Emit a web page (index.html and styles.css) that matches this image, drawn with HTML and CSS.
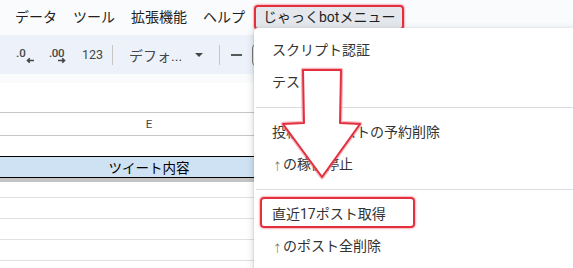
FILE: index.html
```html
<!DOCTYPE html>
<html lang="ja">
<head>
    <meta charset="UTF-8">
    <meta name="viewport" content="width=device-width, initial-scale=1.0">
    <title>じゃっくbotメニュー</title>
    <link rel="stylesheet" href="styles.css">
</head>
<body>
    <div class="sheet-app">
        <!-- メニューバー -->
        <div class="menubar">
            <span class="mb-item">データ</span>
            <span class="mb-item">ツール</span>
            <span class="mb-item">拡張機能</span>
            <span class="mb-item">ヘルプ</span>
            <span class="mb-item active">じゃっくbotメニュー</span>
        </div>

        <!-- ツールバー -->
        <div class="toolbar">
            <svg class="tb-dec" width="22" height="22" viewBox="0 0 22 22">
                <text x="2" y="12.5" font-size="11.5" font-family="Roboto, sans-serif" font-weight="500" fill="#444746">.0</text>
                <path d="M20 16.5H13.5M15.8 14.3l-2.3 2.2 2.3 2.2" stroke="#444746" stroke-width="1.6" fill="none"/>
            </svg>
            <svg class="tb-inc" width="22" height="22" viewBox="0 0 22 22">
                <text x="2" y="12.5" font-size="11.5" font-family="Roboto, sans-serif" font-weight="500" fill="#444746" letter-spacing="-0.4">.00</text>
                <path d="M11 16.5H17.5M15.2 14.3l2.3 2.2-2.3 2.2" stroke="#444746" stroke-width="1.6" fill="none"/>
            </svg>
            <span class="tb-num">123</span>
            <span class="tb-sep"></span>
            <span class="tb-font">デフォ...</span>
            <svg class="tb-caret" width="8" height="4" viewBox="0 0 8 4"><path d="M0 0h8L4 4z" fill="#444746"/></svg>
            <span class="tb-sep second"></span>
            <svg class="tb-minus" width="11" height="12" viewBox="0 0 11 12"><path d="M0 6h11" stroke="#444746" stroke-width="1.8"/></svg>
            <span class="tb-size"></span>
        </div>

        <div class="formula-gap"></div>
        <div class="formula"></div>

        <!-- シート -->
        <div class="grid">
            <div class="row colhead"><div class="cell">E</div></div>
            <div class="row blank"><div class="cell"></div></div>
            <div class="row title"><div class="cell">ツイート内容</div></div>
            <div class="freeze"></div>
            <div class="row first"></div>
            <div class="row"></div>
            <div class="row"></div>
            <div class="row"></div>
        </div>

        <!-- ドロップダウン -->
        <div class="dropdown">
            <div class="dd-item">スクリプト認証</div>
            <div class="dd-item">テスト</div>
            <div class="dd-sep"></div>
            <div class="dd-item">投稿済みポストの予約削除</div>
            <div class="dd-item"><span class="up">↑</span>の稼働停止</div>
            <div class="dd-sep"></div>
            <div class="dd-item marked">直近17ポスト取得</div>
            <div class="dd-item"><span class="up">↑</span>のポスト全削除</div>
        </div>

        <!-- 注釈の矢印 -->
        <svg class="note-arrow" width="90" height="118" viewBox="0 0 90 118">
            <polygon points="25,5 63,5 62,58 82,59 44,112 5,59 26,58" fill="#fff" stroke="rgba(240,90,110,0.45)" stroke-width="4.5" stroke-linejoin="round"/>
            <polygon points="25,5 63,5 62,58 82,59 44,112 5,59 26,58" fill="#fff" stroke="#e3303f" stroke-width="2" stroke-linejoin="round"/>
        </svg>
    </div>
</body>
</html>
```

FILE: styles.css
```css
body {
    margin: 0;
    padding: 0;
    background: #fff;
    font-family: Roboto, "Noto Sans CJK JP", sans-serif;
    overflow: hidden;
}

.sheet-app {
    position: relative;
    width: 573px;
    height: 268px;
    overflow: hidden;
}

.menubar {
    height: 35px;
    display: flex;
    align-items: center;
    padding-left: 7px;
    background: #f9fbfd;
    font-size: 14px;
    color: #1f1f1f;
}

.mb-item {
    padding: 0 8px;
    line-height: 21px;
    white-space: nowrap;
}

.mb-item.active {
    margin-left: 1px;
    padding: 0 7px;
    background: #e4e7ec;
    border: 2px solid #e3303f;
    border-radius: 4px;
    box-shadow: 0 0 1.5px 1px rgba(240, 90, 110, 0.45);
}

.toolbar {
    height: 39px;
    display: flex;
    align-items: center;
    background: #edf2fa;
    color: #444746;
}

.tb-dec { margin-left: 14px; }
.tb-inc { margin-left: 11px; }

.tb-num {
    margin-left: 13px;
    font-size: 12.5px;
}

.tb-sep {
    width: 1px;
    height: 20px;
    margin-left: 9px;
    background: #c7c7c7;
}

.tb-sep.second { margin-left: 16px; }

.tb-font {
    margin-left: 16px;
    font-size: 14px;
    white-space: nowrap;
}

.tb-caret { margin-left: 13px; }
.tb-minus { margin-left: 11px; }

.tb-size {
    width: 30px;
    height: 20px;
    margin-left: 10px;
    border: 1px solid #747775;
    border-radius: 4px;
}

.formula-gap {
    height: 9px;
    background: #f9fbfd;
}

.formula {
    height: 29px;
}

.row {
    height: 20px;
    border-bottom: 1px solid #e1e1e1;
}

.row .cell {
    width: 298px;
    height: 100%;
    display: flex;
    align-items: center;
    justify-content: center;
}

.row.colhead {
    height: 22px;
    border-top: 1px solid #c4c7c5;
    border-bottom: 1px solid #c4c7c5;
    font-size: 11.5px;
    color: #444746;
}

.row.blank {
    border-bottom: none;
}

.row.title {
    border-top: 1px solid #000;
    border-bottom: 1px solid #000;
    background: #cfe2f3;
    font-size: 13.5px;
    color: #000;
}

.freeze {
    height: 4px;
    background: #c4c4c4;
}

.row.first { height: 15px; }

.dropdown {
    position: absolute;
    left: 254px;
    top: 28px;
    width: 340px;
    height: 260px;
    padding-top: 6px;
    background: #fff;
    border-radius: 4px;
    box-shadow: 0 2px 6px 2px rgba(60, 64, 67, 0.15), 0 1px 2px rgba(60, 64, 67, 0.3);
    font-size: 14px;
    color: #333;
}

.dd-item {
    position: relative;
    height: 32px;
    line-height: 32px;
    padding-left: 18px;
    white-space: nowrap;
}

.dd-item .up {
    display: inline-block;
    width: 11px;
    font-family: "DejaVu Sans", sans-serif;
    font-weight: 300;
    font-size: 13px;
    color: #555;
    transform: translateY(2px) scaleX(0.8);
}

.dd-item.marked::after {
    content: '';
    position: absolute;
    left: 6px;
    top: -1px;
    width: 155px;
    height: 31px;
    box-sizing: border-box;
    border: 2px solid #e3303f;
    border-radius: 4px;
    box-shadow: 0 0 1.5px 1px rgba(240, 90, 110, 0.45);
}

.dd-sep {
    height: 1px;
    margin: 9px 0 8px 2px;
    background: #dadce0;
}

.note-arrow {
    position: absolute;
    left: 278px;
    top: 65px;
}
```
